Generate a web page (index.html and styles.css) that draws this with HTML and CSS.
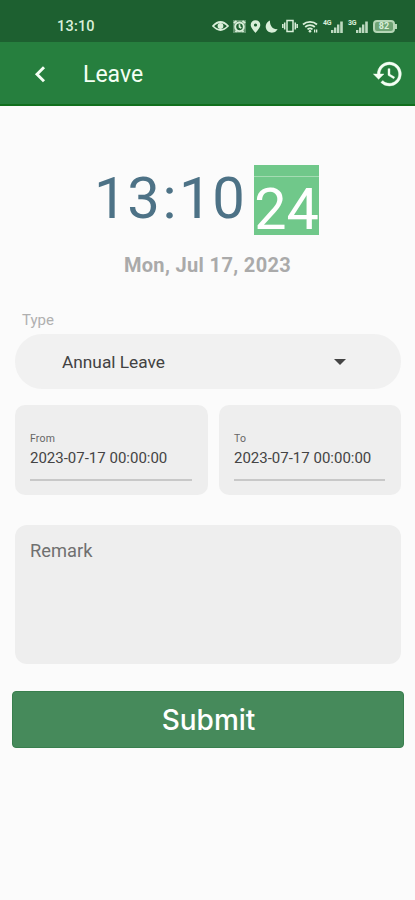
FILE: index.html
```html
<!DOCTYPE html>
<html lang="en">
<head>
    <meta charset="UTF-8">
    <meta name="viewport" content="width=device-width, initial-scale=1.0">
    <title>Leave</title>
    <link rel="stylesheet" href="styles.css">
</head>
<body>
    <div class="status-bar">
        <span class="status-time">13:10</span>
        <div class="status-icons">
            <!-- eye -->
            <svg width="17" height="12" viewBox="0 0 17 12">
                <path d="M1 6Q8.500 -2 16 6Q8.500 14 1 6Z" fill="none" stroke="currentColor" stroke-width="1.800"/>
                <circle cx="8.500" cy="6" r="2.900" fill="currentColor"/>
            </svg>
            <!-- alarm -->
            <svg width="13" height="13" viewBox="0 0 13 13">
                <path d="M0 0h13v13H0z" fill="currentColor" opacity=".35"/>
                <circle cx="6.500" cy="6.800" r="4.300" fill="#1d6030" stroke="currentColor" stroke-width="1.900"/>
                <path d="M.8 3L3.500 .8M12.200 3L9.500 .8M2.500 12l1.300-1.500M10.500 12L9.200 10.500M6.500 4.300V7l1.800 1" fill="none" stroke="currentColor" stroke-width="1.700"/>
            </svg>
            <!-- location -->
            <svg width="11" height="13" viewBox="0 0 10 13">
                <path d="M5 .2a4.800 4.800 0 0 0-4.800 4.800C.2 8 5 12.900 5 12.900S9.800 8 9.800 5A4.800 4.800 0 0 0 5 .2zm0 3.200a1.600 1.600 0 1 1 0 3.200 1.600 1.600 0 0 1 0-3.200z" fill="currentColor"/>
            </svg>
            <!-- moon -->
            <svg width="13" height="13" viewBox="0 0 13 13">
                <path d="M5 .6A6.200 6.200 0 1 0 12.600 9C8.500 10 4.500 6 5 .6z" fill="currentColor"/>
            </svg>
            <!-- vibrate -->
            <svg width="16" height="14" viewBox="0 0 16 14">
                <path d="M5 1.500h6v11H5zM2.700 3.500v7M13.300 3.500v7M.8 5v4M15.200 5v4" fill="none" stroke="currentColor" stroke-width="1.500"/>
            </svg>
            <!-- wifi -->
            <svg width="17" height="13" viewBox="0 0 17 13">
                <path d="M1 4.500a10.500 10.500 0 0 1 14 0M3.200 7a7.200 7.200 0 0 1 9.600 0M5.500 9.400a4 4 0 0 1 5 0" fill="none" stroke="currentColor" stroke-width="1.800"/>
                <circle cx="8" cy="11.300" r="1.300" fill="currentColor"/>
                <path d="M12 9.500h1.300v3H12zM14 9.500h1.300v3H14z" fill="currentColor"/>
            </svg>
            <div class="signal">
                <span>4G</span>
                <svg width="13" height="13" viewBox="0 0 13 13">
                    <path d="M0 10h2.400v3H0zM3 7.500h2.400V13H3zM6 4.500h2.400V13H6zM9.200 1.500h2.600V13H9.200z" fill="currentColor" opacity=".85"/>
                </svg>
            </div>
            <div class="signal">
                <span>3G</span>
                <svg width="13" height="13" viewBox="0 0 13 13">
                    <path d="M0 10h2.400v3H0zM3 7.500h2.400V13H3zM6 4.500h2.400V13H6zM9.200 1.500h2.600V13H9.200z" fill="currentColor" opacity=".85"/>
                </svg>
            </div>
            <div class="battery">82</div>
        </div>
    </div>

    <header class="app-bar">
        <svg class="back" width="14" height="20" viewBox="0 0 14 20">
            <path d="M11 3.200L4 10.200l7 7" fill="none" stroke="currentColor" stroke-width="2.900"/>
        </svg>
        <h1>Leave</h1>
        <svg class="history" width="32" height="32" viewBox="0 0 24 24">
            <path d="M13 3a9 9 0 0 0-9 9H1l3.890 3.890.07.14L9 12H6c0-3.870 3.130-7 7-7s7 3.130 7 7-3.130 7-7 7c-1.930 0-3.680-.79-4.940-2.060l-1.420 1.420A8.954 8.954 0 0 0 13 21a9 9 0 0 0 0-18zm-1 5v5l4.280 2.540.72-1.210-3.500-2.080V8H12z" fill="currentColor" stroke="currentColor" stroke-width=".3"/>
        </svg>
    </header>

    <main>
        <div class="clock">
            <div class="clock-time">13<span class="colon">:</span>10</div>
            <div class="clock-seconds">24</div>
        </div>
        <div class="date">Mon, Jul 17, 2023</div>

        <form onsubmit="return false;">
            <label class="type-label">Type</label>
            <div class="type-select">
                <span>Annual Leave</span>
                <i class="caret"></i>
            </div>

            <div class="date-row">
                <div class="date-box">
                    <label>From</label>
                    <div class="date-value">2023-07-17 00:00:00</div>
                </div>
                <div class="date-box">
                    <label>To</label>
                    <div class="date-value">2023-07-17 00:00:00</div>
                </div>
            </div>

            <div class="remark">Remark</div>

            <button type="submit" class="submit">Submit</button>
        </form>
    </main>
</body>
</html>
```
FILE: styles.css
```css
* {
    box-sizing: border-box;
}
body {
    margin: 0;
    height: 900px;
    overflow: hidden;
    font-family: Roboto, sans-serif;
    background-color: #fbfbfb;
    color: #444;
}
svg {
    display: block;
    flex: none;
}

/* Status bar */
.status-bar {
    display: flex;
    justify-content: space-between;
    height: 42px;
    padding: 11px 18px 0 57px;
    background-color: #1d6030;
    color: #d9efd9;
}
.status-time {
    font-size: 14.5px;
    font-weight: 500;
    line-height: 32px;
    letter-spacing: 0.2px;
}
.status-icons {
    display: flex;
    align-items: center;
    gap: 4px;
    height: 30px;
}
.signal {
    display: flex;
    align-items: flex-start;
    width: 21px;
}
.signal span {
    width: 9px;
    font-size: 7px;
    font-weight: 700;
    line-height: 6px;
    letter-spacing: -0.3px;
}
.battery {
    position: relative;
    width: 22px;
    height: 13px;
    margin-right: 2px;
    border: 2px solid #b5d6b6;
    border-radius: 4px;
    background-color: #6fa375;
    font-size: 9px;
    font-weight: 700;
    line-height: 9px;
    text-align: center;
}
.battery::after {
    content: "";
    position: absolute;
    top: 2px;
    right: -4px;
    width: 2px;
    height: 5px;
    background-color: #b5d6b6;
}

/* App bar */
.app-bar {
    display: flex;
    align-items: center;
    height: 64px;
    padding: 0 11px 0 33px;
    border-bottom: 2px solid #116f1d;
    background-color: #267f3e;
    color: #f4fff4;
}
.back {
    margin-top: 2px;
}
.app-bar h1 {
    flex: 1;
    margin: 3px 0 0 36px;
    font-size: 23px;
    font-weight: 400;
    line-height: 28px;
}
.history {
    margin-top: 2px;
}

/* Clock */
.clock {
    display: flex;
    height: 129px;
    padding: 59px 0 0 94px;
}
.clock-time {
    width: 160px;
    color: #4d7286;
    font-size: 58px;
    line-height: 66px;
    letter-spacing: 0.6px;
    white-space: nowrap;
}
.colon {
    margin: 0 2px;
}
.clock-seconds {
    width: 65px;
    height: 70px;
    padding-top: 11px;
    background: linear-gradient(#70c88a 11px, #a5dcb3 11px, #a5dcb3 12px, #70c88a 12px);
    color: #fff;
    font-size: 57.5px;
    line-height: 68px;
    text-align: center;
}
.date {
    height: 60px;
    padding-top: 17px;
    color: #aaa;
    font-size: 20px;
    font-weight: 700;
    line-height: 26px;
    letter-spacing: 0.35px;
    text-align: center;
}

/* Form */
form {
    padding: 0 11px 0 12px;
}
.type-label {
    display: block;
    height: 39px;
    padding: 15px 0 0 10px;
    color: #b0b0b0;
    font-size: 15px;
    line-height: 20px;
}
.type-select {
    display: flex;
    align-items: center;
    justify-content: space-between;
    height: 55px;
    margin: 0 3px;
    padding: 0 55px 0 47px;
    border-radius: 27px;
    background-color: #f1f1f1;
    color: #424242;
    font-size: 17.3px;
}
.caret {
    border: 6px solid transparent;
    border-top-color: #444;
    border-bottom: 0;
}
.date-row {
    display: grid;
    grid-template-columns: 193px 182px;
    gap: 11px;
    margin: 16px 3px 30px;
}
.date-box {
    height: 90px;
    padding: 26px 16px 0 15px;
    border-radius: 10px;
    background-color: #eee;
}
.date-box label {
    display: block;
    color: #666;
    font-size: 10.5px;
    line-height: 15px;
    letter-spacing: 0.2px;
}
.date-value {
    height: 35px;
    padding-top: 2px;
    border-bottom: 2px solid #c8c8c8;
    color: #444;
    font-size: 15px;
    line-height: 20px;
    white-space: nowrap;
}
.remark {
    height: 139px;
    margin: 0 3px 27px;
    padding: 15px;
    border-radius: 12px;
    background-color: #eee;
    color: #707070;
    font-size: 18.3px;
    line-height: 22px;
}
.submit {
    display: block;
    width: 100%;
    height: 57px;
    padding: 0 0 0 1px;
    border: 1px solid #397f4e;
    border-radius: 4px;
    background-color: #468a5b;
    color: #fff;
    font-family: Inter, sans-serif;
    font-size: 28px;
    font-weight: 500;
}
```
